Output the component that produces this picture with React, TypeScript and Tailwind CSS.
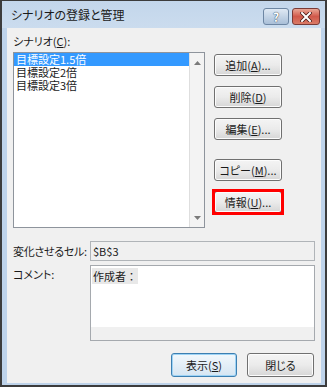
import React from 'react';

const font = {
  fontFamily: '"Noto Sans CJK JP", "Noto Sans", sans-serif',
};

function Btn({ children, wide = 'w-[68px]', h = 'h-[22px]', primary = false }: { children: React.ReactNode; wide?: string; h?: string; primary?: boolean }) {
  return (
    <div
      className={`${wide} ${h} flex items-center justify-center rounded-[3px] border text-[11px] text-[#1a1a1a] ${
        primary
          ? 'border-[#3c7fb1] bg-linear-to-b from-[#f2f8fc] to-[#d5e5f2] shadow-[inset_0_0_0_1px_#9ed3f5]'
          : 'border-[#707070] bg-linear-to-b from-[#f4f4f4] via-[#ebebeb] to-[#d6d6d6] shadow-[inset_0_0_0_1px_#fcfcfc]'
      }`}
    >
      {children}
    </div>
  );
}

export default function App() {
  return (
    <div
      className="w-[327px] h-[387px] bg-[#3c3c3c] pt-px px-[2px] pb-[2px] [font-feature-settings:'palt']"
      style={font}
    >
      <div className="h-full flex flex-col bg-[#bed3ea]">
        {/* title bar */}
        <div className="h-[27px] flex items-center pl-[9px] pr-[5px] bg-linear-to-b from-[#c3d6eb] to-[#cbdcee]">
          <span className="text-[12px] text-[#1a1a1a] flex-1 leading-none">シナリオの登録と管理</span>
          <div className="w-[26px] h-[17px] rounded-[3px] border border-[#6d86a3] bg-linear-to-b from-[#dfe9f4] to-[#a9bfd8] flex items-center justify-center mt-[4px]">
            <span className="text-[12px] font-bold text-white leading-none [text-shadow:0_0_1px_#34465c,0_0_1px_#34465c]">?</span>
          </div>
          <div className="ml-[3px] w-[28px] h-[17px] rounded-[3px] border border-[#7a3a36] bg-linear-to-b from-[#e8a696] via-[#d0584a] to-[#d97a66] flex items-center justify-center mt-[4px]">
            <svg width="12" height="10" viewBox="0 0 12 10">
              <path d="M2 1 L10 9 M10 1 L2 9" stroke="#4a1a16" strokeWidth="3.6" strokeLinecap="square" />
              <path d="M2 1 L10 9 M10 1 L2 9" stroke="#ffffff" strokeWidth="2" strokeLinecap="square" />
            </svg>
          </div>
        </div>

        {/* client */}
        <div className="flex-1 ml-[5px] mr-[4px] mb-[2px] bg-[#f0f0f0] pt-[7px] pl-[6px] pr-[6px] pb-[6px] flex flex-col text-[11px] text-[#1a1a1a]">
          <div className="h-[13px] leading-[13px] mb-[4px]">
            シナリオ(<u>C</u>):
          </div>
          <div className="flex">
            {/* listbox */}
            <div className="w-[192px] h-[176px] border border-[#8e949c] bg-white flex">
              <div className="flex-1 flex flex-col leading-[13px]">
                <div className="bg-[#3399ff] text-white h-[13px] pl-[2px]">目標設定1.5倍</div>
                <div className="h-[13px] pl-[2px]">目標設定2倍</div>
                <div className="h-[13px] pl-[2px]">目標設定3倍</div>
              </div>
              <div className="w-[15px] bg-[#f3f3f3] border-l border-[#dedede] flex flex-col items-center justify-between pt-[8px] pb-[7px]">
                <svg width="7" height="4" viewBox="0 0 7 4"><path d="M3.5 0 L7 4 L0 4 Z" fill="#7a7a7a" /></svg>
                <svg width="7" height="4" viewBox="0 0 7 4"><path d="M0 0 L7 0 L3.5 4 Z" fill="#7a7a7a" /></svg>
              </div>
            </div>
            {/* buttons */}
            <div className="ml-[9px] mt-[2px] flex flex-col">
              <Btn>追加(<u>A</u>)...</Btn>
              <div className="mt-[10px]"><Btn>削除(<u>D</u>)</Btn></div>
              <div className="mt-[10px]"><Btn>編集(<u>E</u>)...</Btn></div>
              <div className="mt-[19px]"><Btn>コピー(<u>M</u>)...</Btn></div>
              <div className="mt-[10px] relative">
                <Btn>情報(<u>U</u>)...</Btn>
                <div className="absolute -left-[2px] -top-[2px] w-[72px] h-[26px] border-[3px] border-[#ff0000]" />
              </div>
            </div>
          </div>

          <div className="mt-[13px] flex items-center">
            <div className="w-[77px] tracking-[-0.3px]">変化させるセル:</div>
            <div className="flex-1 h-[20px] border border-[#b0b4b8] bg-[#f0f0f0] flex items-center pl-[2px]">$B$3</div>
          </div>

          <div className="mt-[4px] flex">
            <div className="w-[77px] pt-[1px]">コメント:</div>
            <div className="flex-1 h-[76px] border border-[#a5a9ae] bg-white flex flex-col">
              <div className="flex-1 pt-[2px] pl-[1px]">
                <span className="bg-[#e8e8e8] px-px [font-feature-settings:normal]">作成者：</span>
              </div>
              <div className="h-[13px] bg-[#f0f0f0]" />
            </div>
          </div>

          <div className="mt-[12px] flex justify-end pr-px">
            <Btn wide="w-[66px]" h="h-[24px]" primary>表示(<u>S</u>)</Btn>
            <div className="ml-[10px]"><Btn wide="w-[67px]" h="h-[24px]">閉じる</Btn></div>
          </div>
        </div>
      </div>
    </div>
  );
}
